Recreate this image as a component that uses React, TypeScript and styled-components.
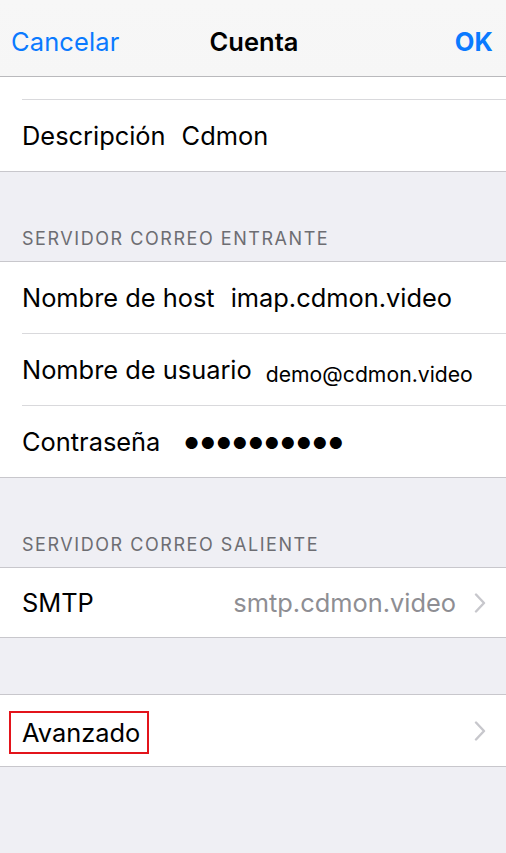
import React from "react";
import styled, { createGlobalStyle } from "styled-components";

const Global = createGlobalStyle`
  html, body { margin: 0; padding: 0; background: #efeff4; }
  body { font-family: Inter, "Noto Sans", "Liberation Sans", sans-serif; -webkit-font-smoothing: antialiased; }
`;

const Page = styled.div`
  width: 506px;
  height: 853px;
  background: #efeff4;
  overflow: hidden;
  display: flex;
  flex-direction: column;
`;

const NavBar = styled.header`
  height: 77px;
  flex: none;
  background: linear-gradient(#f7f7f7, #f6f6f6);
  border-bottom: 1px solid #b9b9bc;
  display: grid;
  grid-template-columns: 1fr auto 1fr;
  align-items: center;
  padding: 6px 13px 0 11px;
  box-sizing: border-box;
`;

const NavButton = styled.span<{ $bold?: boolean; $right?: boolean }>`
  color: #0a7aff;
  font-size: 25.5px;
  font-weight: ${(p) => (p.$bold ? 700 : 400)};
  justify-self: ${(p) => (p.$right ? "end" : "start")};
  letter-spacing: 0.1px;
`;

const NavTitle = styled.span`
  color: #000;
  font-size: 25.5px;
  font-weight: 600;
  padding-left: 4px;
`;

const Group = styled.section<{ $open?: boolean }>`
  background: #fff;
  border-top: ${(p) => (p.$open ? "none" : "1px solid #c8c7cc")};
  border-bottom: 1px solid #c8c7cc;
  display: flex;
  flex-direction: column;
`;

const Stub = styled.div`
  height: 22px;
`;

const Row = styled.div<{ $h?: number }>`
  height: ${(p) => p.$h ?? 71}px;
  display: flex;
  align-items: center;
  padding: 0 20px 0 22px;
  box-sizing: border-box;
  & + & {
    height: 72px;
    border-top: 1px solid #d9d9dc;
    margin-left: 22px;
    padding-left: 0;
  }
`;

const InsetRule = styled.div`
  height: 1px;
  background: #d9d9dc;
  margin-left: 22px;
`;

const Label = styled.span`
  font-size: 25.4px;
  color: #000;
  white-space: nowrap;
`;

const Value = styled.span<{ $small?: boolean; $dim?: boolean; $push?: boolean }>`
  font-size: ${(p) => (p.$small ? "21.2px" : "25.4px")};
  color: ${(p) => (p.$dim ? "#8e8e93" : "#000")};
  margin-left: ${(p) => (p.$push ? "auto" : p.$small ? "14px" : "16px")};
  white-space: nowrap;
  position: relative;
  top: ${(p) => (p.$small ? "4px" : "0")};
`;

const Dots = styled.span`
  font-size: 16px;
  margin-left: 24px;
  letter-spacing: 1.4px;
  color: #000;
  position: relative;
  top: 1px;
`;

const SectionHeader = styled.div<{ $h: number }>`
  height: ${(p) => p.$h}px;
  display: flex;
  align-items: flex-end;
  padding: 0 0 12px 22px;
  box-sizing: border-box;
  font-size: 18px;
  color: #6d6d72;
  letter-spacing: 1.55px;
`;

const Spacer = styled.div<{ $h: number }>`
  height: ${(p) => p.$h}px;
  flex: none;
`;

const Chevron = styled.svg`
  width: 12px;
  height: 20px;
  margin-left: 18px;
  flex: none;
`;

const Highlight = styled.span`
  display: inline-block;
  border: 2px solid #e3141b;
  padding: 5px 7px 4px 11px;
  margin-left: -13px;
  line-height: 30px;
  position: relative;
  top: 2px;
`;

const ChevronIcon = () => (
  <Chevron viewBox="0 0 12 20">
    <path d="M2 1.5 L10 10 L2 18.5" fill="none" stroke="#c7c7cc" strokeWidth="2.4" strokeLinecap="round" strokeLinejoin="round" />
  </Chevron>
);

export default function App() {
  return (
    <Page>
      <Global />
      <NavBar>
        <NavButton>Cancelar</NavButton>
        <NavTitle>Cuenta</NavTitle>
        <NavButton $bold $right>OK</NavButton>
      </NavBar>
      <Group $open>
        <Stub />
        <InsetRule />
        <Row>
          <Label>Descripción</Label>
          <Value>Cdmon</Value>
        </Row>
      </Group>
      <SectionHeader $h={89}>SERVIDOR CORREO ENTRANTE</SectionHeader>
      <Group>
        <Row>
          <Label>Nombre de host</Label>
          <Value>imap.cdmon.video</Value>
        </Row>
        <Row>
          <Label>Nombre de usuario</Label>
          <Value $small>demo@cdmon.video</Value>
        </Row>
        <Row>
          <Label>Contraseña</Label>
          <Dots>●●●●●●●●●●</Dots>
        </Row>
      </Group>
      <SectionHeader $h={89}>SERVIDOR CORREO SALIENTE</SectionHeader>
      <Group>
        <Row $h={69}>
          <Label>SMTP</Label>
          <Value $dim $push>smtp.cdmon.video</Value>
          <ChevronIcon />
        </Row>
      </Group>
      <Spacer $h={56} />
      <Group>
        <Row>
          <Label>
            <Highlight>Avanzado</Highlight>
          </Label>
          <Value $push />
          <ChevronIcon />
        </Row>
      </Group>
    </Page>
  );
}
